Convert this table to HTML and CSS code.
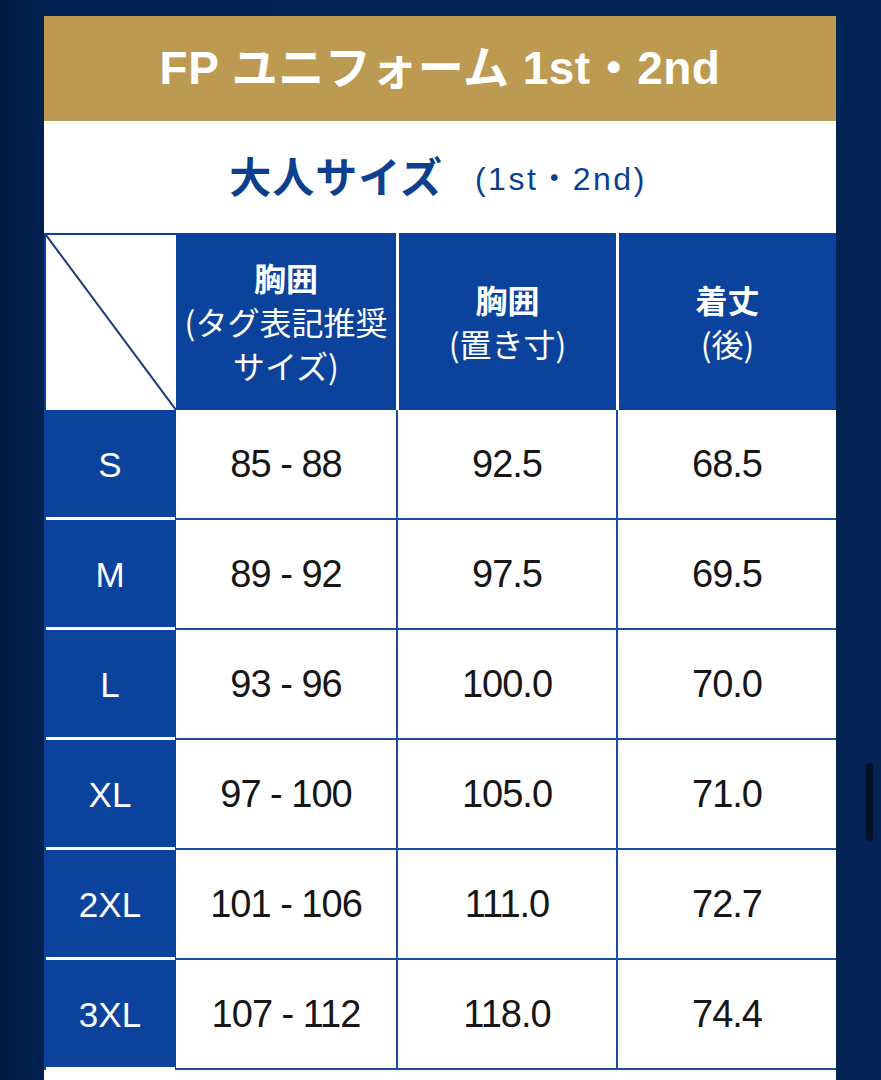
FILE: index.html
```html
<!DOCTYPE html>
<html lang="ja">
<head>
<meta charset="utf-8">
<title>FP ユニフォーム サイズ表</title>
<link rel="stylesheet" href="styles.css">
</head>
<body>
<div class="page">
  <div class="card">
    <div class="title">FP ユニフォーム 1st・2nd</div>
    <div class="subtitle"><span class="sub-main">大人サイズ</span><span class="sub-note">(1st・2nd)</span></div>
    <div class="table">
      <div class="row head-row">
        <div class="corner">
          <svg class="diag" viewBox="0 0 132 177" preserveAspectRatio="none"><line x1="0" y1="0" x2="132" y2="177" stroke="#1a3a7a" stroke-width="2"/></svg>
        </div>
        <div class="hcell first"><span class="hb">胸囲</span><span class="hn">(タグ表記推奨</span><span class="hn">サイズ)</span></div>
        <div class="hcell"><span class="hb">胸囲</span><span class="hn">(置き寸)</span></div>
        <div class="hcell"><span class="hb">着丈</span><span class="hn">(後)</span></div>
      </div>
      <div class="row"><div class="label">S</div><div class="cell first">85 - 88</div><div class="cell">92.5</div><div class="cell">68.5</div></div>
      <div class="row"><div class="label">M</div><div class="cell first">89 - 92</div><div class="cell">97.5</div><div class="cell">69.5</div></div>
      <div class="row"><div class="label">L</div><div class="cell first">93 - 96</div><div class="cell">100.0</div><div class="cell">70.0</div></div>
      <div class="row"><div class="label">XL</div><div class="cell first">97 - 100</div><div class="cell">105.0</div><div class="cell">71.0</div></div>
      <div class="row"><div class="label">2XL</div><div class="cell first">101 - 106</div><div class="cell">111.0</div><div class="cell">72.7</div></div>
      <div class="row"><div class="label">3XL</div><div class="cell first">107 - 112</div><div class="cell">118.0</div><div class="cell">74.4</div></div>
    </div>
    <div class="tail"></div>
  </div>
  <div class="scrollbar"></div>
</div>
</body>
</html>
```

FILE: styles.css
```css
* { box-sizing: border-box; }
html, body { margin: 0; padding: 0; }
body {
  background: linear-gradient(to right, #021a42 0px, #022150 40px, #022353 100%);
  font-family: "Liberation Sans", "Noto Sans CJK JP", sans-serif;
  height: 1080px;
  overflow: hidden;
}
.page {
  position: relative;
  padding-top: 16px;
  padding-left: 44px;
  height: 1080px;
}
.card {
  width: 792px;
  background: #ffffff;
}
.title {
  height: 105px;
  background: #bc9a51;
  color: #ffffff;
  font-size: 46px;
  font-weight: 700;
  display: flex;
  align-items: center;
  justify-content: center;
  padding-bottom: 10px;
  letter-spacing: 0.5px;
}
.subtitle {
  height: 112px;
  display: flex;
  align-items: center;
  justify-content: center;
  gap: 32px;
  color: #0c3f8e;
  padding-bottom: 6px;
  padding-right: 4px;
}
.sub-main {
  font-family: "Noto Sans CJK JP", sans-serif;
  font-size: 42px;
  font-weight: 700;
  letter-spacing: 1px;
}
.sub-note {
  font-size: 32px;
  letter-spacing: 2.5px;
  padding-top: 4px;
}
.table {
  display: flex;
  flex-direction: column;
}
.row {
  display: grid;
  grid-template-columns: 132px 220px 220px 220px;
  height: 110px;
}
.head-row {
  height: 177px;
}
.corner {
  position: relative;
  background: #ffffff;
  border-top: 2px solid #0c419b;
  border-left: 2px solid #0c419b;
}
.diag {
  position: absolute;
  inset: 0;
  width: 100%;
  height: 100%;
}
.hcell {
  background: #0b429b;
  color: #ffffff;
  border-left: 3px solid #ffffff;
  display: flex;
  flex-direction: column;
  align-items: center;
  justify-content: center;
  font-family: "Noto Sans CJK JP", sans-serif;
  font-size: 32px;
  line-height: 44px;
  padding-bottom: 2px;
  white-space: nowrap;
}
.hcell.first { border-left: none; }
.hb { font-weight: 700; }
.hn { font-weight: 400; }
.label {
  background: #0b429b;
  color: #ffffff;
  font-size: 35px;
  display: flex;
  align-items: center;
  justify-content: center;
  position: relative;
}
.label::after {
  content: "";
  position: absolute;
  left: 2px;
  right: 1px;
  bottom: 0;
  height: 3px;
  background: #ffffff;
}
.cell {
  background: #ffffff;
  color: #161616;
  font-size: 38px;
  letter-spacing: -1px;
  display: flex;
  align-items: center;
  justify-content: center;
  border-bottom: 2px solid #1b4d9e;
  border-left: 2px solid #1b4d9e;
}
.cell.first { border-left: none; }
.tail {
  height: 20px;
  background: #ffffff;
}
.scrollbar {
  position: absolute;
  left: 866px;
  top: 763px;
  width: 7px;
  height: 78px;
  border-radius: 4px;
  background: #020f28;
}
```
